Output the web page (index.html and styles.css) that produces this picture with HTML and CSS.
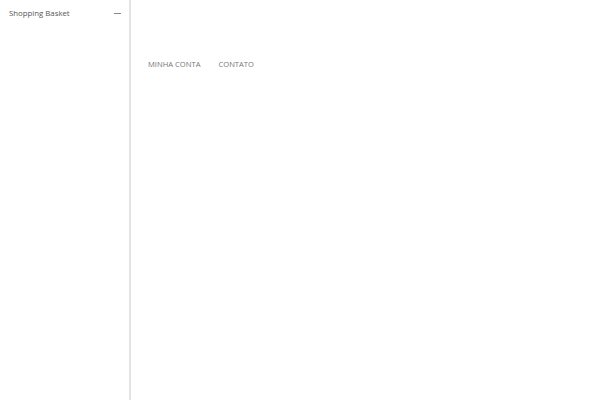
FILE: index.html
```html
<!DOCTYPE html>
<html lang="pt">
<head>
<meta charset="utf-8">
<link rel="stylesheet" href="styles.css">
</head>
<body>
<div class="page">
  <aside class="sidebar">
    <div class="basket">
      <span class="basket-title">Shopping Basket</span>
      <span class="basket-toggle"></span>
    </div>
  </aside>
  <main class="main">
    <nav class="nav">
      <a class="nav-link" href="#">MINHA CONTA</a>
      <a class="nav-link" href="#">CONTATO</a>
    </nav>
  </main>
</div>
</body>
</html>
```
FILE: styles.css
```css
html, body {
  margin: 0;
  padding: 0;
  background: #fff;
  font-family: "Open Sans", "Liberation Sans", sans-serif;
}
.page {
  display: flex;
  width: 600px;
  height: 400px;
}
.sidebar {
  width: 129px;
  border-right: 2px solid #e4e4e4;
  flex: none;
}
.basket {
  display: flex;
  align-items: center;
  justify-content: space-between;
  padding: 6px 8px 0 9px;
  height: 14px;
}
.basket-title {
  font-size: 7.8px;
  color: #555;
}
.basket-toggle {
  width: 7px;
  height: 1px;
  background: #888;
}
.main {
  flex: 1;
  padding: 57px 0 0 17px;
}
.nav {
  display: flex;
  gap: 18px;
}
.nav-link {
  font-size: 7.6px;
  color: #777;
  text-decoration: none;
  line-height: 14px;
}
```
